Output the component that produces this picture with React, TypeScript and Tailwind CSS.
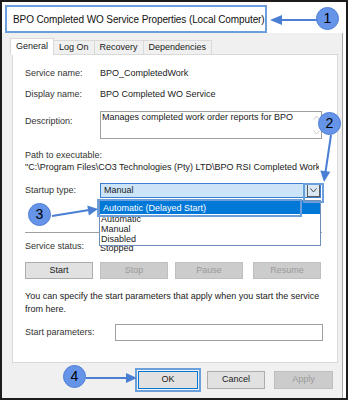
import React from 'react';

const font = { fontFamily: '"Liberation Sans", Arial, sans-serif' };

function Badge({ n, className }: { n: string; className: string }) {
  return (
    <div
      className={`absolute w-[23px] h-[23px] rounded-full bg-[#6594e8] border border-[#4f7fd6] flex items-center justify-center text-[14px] text-black ${className}`}
    >
      {n}
    </div>
  );
}

function Btn({ label, disabled, className = '' }: { label: string; disabled?: boolean; className?: string }) {
  return (
    <div
      className={`h-[17px] flex items-center justify-center border text-[9px] ${
        disabled ? 'bg-[#cccccc] border-[#bfbfbf] text-[#9a9a9a]' : 'bg-[#e1e1e1] border-[#adadad] text-[#1a1a1a]'
      } ${className}`}
    >
      {label}
    </div>
  );
}

export default function App() {
  return (
    <div style={font} className="relative w-[348px] h-[400px] border-2 border-[#1c1c1c] bg-white overflow-hidden text-[#1a1a1a]">
      {/* title bar */}
      <div className="h-[31px] pt-[3px] pl-[3px]">
        <div className="w-[262px] h-[28px] border-2 border-[#6a9fdc] flex items-center pl-[6px] text-[10px] tracking-[-0.1px] text-[#111]">
          BPO Completed WO Service Properties (Local Computer)
        </div>
      </div>

      {/* dialog body */}
      <div className="mr-[3px] h-[365px] bg-[#f0f0f0] border-r border-[#a8a8a8] pl-[8px] pr-[5px] pt-[4px]">
        {/* tabs */}
        <div className="flex items-end h-[17px] text-[9px]">
          <div className="relative z-10 -mb-px h-[17px] px-[5px] bg-white border border-b-0 border-[#d9d9d9] flex items-center">General</div>
          <div className="h-[14px] px-[5px] border border-l-0 border-b-0 border-[#d9d9d9] flex items-center">Log On</div>
          <div className="h-[14px] px-[5px] border border-l-0 border-b-0 border-[#d9d9d9] flex items-center">Recovery</div>
          <div className="h-[14px] px-[5px] border border-l-0 border-b-0 border-[#d9d9d9] flex items-center">Dependencies</div>
        </div>

        {/* panel */}
        <div className="ml-[2px] w-[326px] h-[309px] bg-white border border-[#d9d9d9] pl-[12px] text-[9px]">
          <div className="mt-[11px] h-[16px] flex items-center">
            <span className="w-[75px] text-[#333]">Service name:</span>
            <span>BPO_CompletedWork</span>
          </div>
          <div className="mt-[5px] h-[16px] flex items-center">
            <span className="w-[75px] text-[#333]">Display name:</span>
            <span>BPO Completed WO Service</span>
          </div>
          <div className="mt-[8px] h-[28px] flex">
            <span className="w-[75px] pt-[4px] text-[#333]">Description:</span>
            <div className="w-[222px] h-[28px] border border-[#a0a0a0] flex justify-between pl-[1px]">
              <span className="leading-[11px]">Manages completed work order reports for BPO</span>
              <div className="w-[10px] flex flex-col items-center justify-between py-[3px] text-[#c8c8c8]">
                <svg width="7" height="5" viewBox="0 0 7 5"><path d="M0.5 4.5 L3.5 1 L6.5 4.5" fill="none" stroke="currentColor" /></svg>
                <svg width="7" height="5" viewBox="0 0 7 5"><path d="M0.5 0.5 L3.5 4 L6.5 0.5" fill="none" stroke="currentColor" /></svg>
              </div>
            </div>
          </div>
          <div className="mt-[10px] leading-[12px] text-[#333]">Path to executable:</div>
          <div className="leading-[12px] whitespace-nowrap overflow-hidden w-[294px]">
            "C:\Program Files\CO3 Technologies (Pty) LTD\BPO RSI Completed Work
          </div>
          <div className="mt-[10px] h-[15px] flex items-center">
            <span className="w-[75px] text-[#333]">Startup type:</span>
            <div className="w-[221px] h-[15px] bg-[#cce4f7] border border-[#3c7fd1] flex items-center justify-between pl-[3px]">
              <span>Manual</span>
              <div className="w-[13px] h-[13px] border border-[#5b5b5b] bg-[#dbe8f4] flex items-center justify-center">
                <svg width="7" height="5" viewBox="0 0 7 5"><path d="M0.5 0.5 L3.5 4 L6.5 0.5" fill="none" stroke="#444" /></svg>
              </div>
            </div>
          </div>
          <div className="mt-[34px] w-[297px] h-px bg-[#a0a0a0]" />
          <div className="mt-[7px] h-[14px] flex items-center">
            <span className="w-[75px] text-[#333]">Service status:</span>
            <span className="pt-[3px]">Stopped</span>
          </div>
          <div className="mt-[8px] flex gap-[7px]">
            <Btn label="Start" className="w-[68px]" />
            <Btn label="Stop" disabled className="w-[68px]" />
            <Btn label="Pause" disabled className="w-[68px]" />
            <Btn label="Resume" disabled className="ml-[3px] w-[68px]" />
          </div>
          <div className="mt-[11px] leading-[13px] w-[300px]">
            You can specify the start parameters that apply when you start the service from here.
          </div>
          <div className="mt-[8px] h-[17px] flex items-center">
            <span className="w-[90px] text-[#333]">Start parameters:</span>
            <div className="w-[208px] h-[17px] border border-[#a0a0a0] bg-white" />
          </div>
        </div>

        {/* bottom buttons */}
        <div className="mt-[8px] flex justify-end gap-[9px] pr-[4px] text-[9px]">
          <div className="relative w-[60px] h-[18px] bg-[#e1e1e1] border border-[#0078d7] flex items-center justify-center">
            OK
            <div className="absolute -inset-[4px] border-2 border-[#6a9fdc]" />
          </div>
          <div className="w-[58px] h-[18px] bg-[#e1e1e1] border border-[#adadad] flex items-center justify-center">Cancel</div>
          <div className="w-[59px] h-[18px] bg-[#cccccc] border border-[#bfbfbf] text-[#9a9a9a] flex items-center justify-center">Apply</div>
        </div>
      </div>

      {/* open dropdown list */}
      <div className="absolute left-[97px] top-[198px] w-[222px] h-[46px] bg-white border border-[#6f8fb8] text-[9px] leading-[10px]">
        <div className="h-[13px] bg-[#0078d7] text-white pl-[3px] flex items-center">Automatic (Delayed Start)</div>
        <div className="pl-[1px]">Automatic</div>
        <div className="pl-[1px]">Manual</div>
        <div className="pl-[1px]">Disabled</div>
      </div>

      {/* annotation boxes */}
      <div className="absolute left-[95px] top-[197px] w-[205px] h-[18px] border-2 border-[#6a9fdc]" />
      <div className="absolute left-[301px] top-[181px] w-[21px] h-[20px] border-2 border-[#6a9fdc]" />

      {/* arrows */}
      <svg className="absolute left-0 top-0" width="348" height="400">
        <g stroke="#4a7fd4" strokeWidth="2" fill="none">
          <line x1="315" y1="18" x2="278" y2="18" />
          <line x1="329" y1="133" x2="323.5" y2="170" />
          <line x1="50" y1="214" x2="87" y2="208" />
          <line x1="84" y1="376" x2="125" y2="376" />
        </g>
        <g fill="#4a7fd4">
          <polygon points="268,18 280,13 280,23" />
          <polygon points="322,180 328.3,169.7 318.3,168.5" />
          <polygon points="96,207 86.9,213.5 85.3,203.6" />
          <polygon points="135,376 124,371 124,381" />
        </g>
      </svg>

      <Badge n="1" className="left-[314px] top-[5px]" />
      <Badge n="2" className="left-[316px] top-[110px]" />
      <Badge n="3" className="left-[26px] top-[201px]" />
      <Badge n="4" className="left-[61px] top-[363px]" />
    </div>
  );
}
